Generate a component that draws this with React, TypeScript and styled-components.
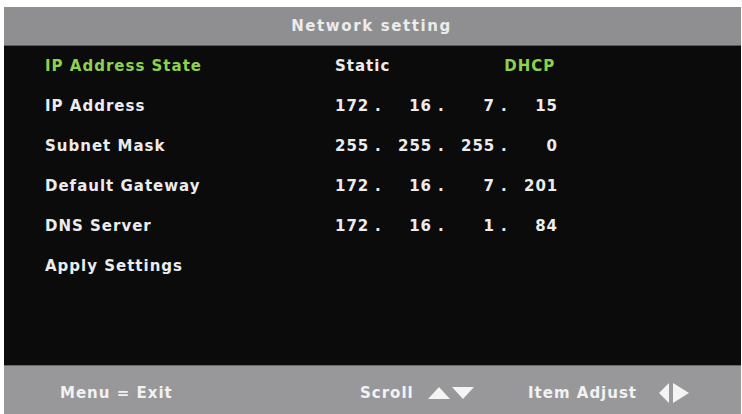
import React from "react";
import styled, { createGlobalStyle } from "styled-components";

const GlobalStyle = createGlobalStyle`
  html, body {
    margin: 0;
    padding: 0;
    background: #ffffff;
  }
  body {
    font-family: "DejaVu Sans", Verdana, sans-serif;
  }
`;

const Screen = styled.div`
  width: 742px;
  height: 414px;
  padding: 7px 1px 0 4px;
  box-sizing: border-box;
  display: flex;
`;

const Panel = styled.div`
  flex: 1;
  display: flex;
  flex-direction: column;
  background: #0b0b0c;
  font-weight: bold;
  font-size: 15px;
  letter-spacing: 1px;
`;

const Header = styled.div`
  height: 38px;
  background: #8f8f91;
  color: #ececec;
  display: flex;
  align-items: center;
  justify-content: center;
  padding-right: 2px;
  letter-spacing: 1.6px;
  border-bottom: 1px solid #5a5a5c;
`;

const Body = styled.div`
  flex: 1;
  padding: 0 0 0 41px;
`;

const Row = styled.div`
  height: 40px;
  display: flex;
  align-items: center;
`;

const Label = styled.div<{ $active?: boolean }>`
  width: 290px;
  color: ${(p) => (p.$active ? "#8ed24c" : "#ececec")};
`;

const Value = styled.span<{ $active?: boolean }>`
  color: ${(p) => (p.$active ? "#8ed24c" : "#ececec")};
`;

const StateGroup = styled.div`
  display: flex;
  gap: 114px;
`;

const Octets = styled.div`
  display: grid;
  grid-template-columns: repeat(4, 63px);
  color: #ececec;
`;

const Octet = styled.div`
  display: flex;
`;

const Num = styled.span`
  width: 34px;
  text-align: right;
`;

const Dot = styled.span`
  margin-left: 6px;
`;

const Footer = styled.div`
  height: 49px;
  background: #98989a;
  color: #f2f2f2;
  display: flex;
  align-items: center;
  padding: 5px 0 0 56px;
  box-sizing: border-box;
  border-top: 1px solid #6a6a6c;
`;

const Hint = styled.div<{ $w?: number }>`
  display: flex;
  align-items: center;
  width: ${(p) => (p.$w ? `${p.$w}px` : "auto")};
`;

const Arrows = styled.svg<{ $gap: number }>`
  margin-left: ${(p) => p.$gap}px;
  fill: #f4f4f4;
`;

const IP_ROWS: { label: string; octets: string[] }[] = [
  { label: "IP Address", octets: ["172", "16", "7", "15"] },
  { label: "Subnet Mask", octets: ["255", "255", "255", "0"] },
  { label: "Default Gateway", octets: ["172", "16", "7", "201"] },
  { label: "DNS Server", octets: ["172", "16", "1", "84"] },
];

const App: React.FC = () => {
  return (
    <Screen>
      <GlobalStyle />
      <Panel>
        <Header>Network setting</Header>
        <Body>
          <Row>
            <Label $active>IP Address State</Label>
            <StateGroup>
              <Value>Static</Value>
              <Value $active>DHCP</Value>
            </StateGroup>
          </Row>
          {IP_ROWS.map((row) => (
            <Row key={row.label}>
              <Label>{row.label}</Label>
              <Octets>
                {row.octets.map((o, i) => (
                  <Octet key={i}>
                    <Num>{o}</Num>
                    {i < 3 && <Dot>.</Dot>}
                  </Octet>
                ))}
              </Octets>
            </Row>
          ))}
          <Row>
            <Label>Apply Settings</Label>
          </Row>
        </Body>
        <Footer>
          <Hint $w={300}>Menu = Exit</Hint>
          <Hint $w={168}>
            Scroll
            <Arrows $gap={14} width="46" height="12" viewBox="0 0 46 12">
              <polygon points="0,12 11,0 22,12" />
              <polygon points="24,0 46,0 35,12" />
            </Arrows>
          </Hint>
          <Hint>
            Item Adjust
            <Arrows $gap={22} width="30" height="20" viewBox="0 0 30 20">
              <polygon points="0,10 10,0 10,20" />
              <polygon points="14,0 30,10 14,20" />
            </Arrows>
          </Hint>
        </Footer>
      </Panel>
    </Screen>
  );
};

export default App;
